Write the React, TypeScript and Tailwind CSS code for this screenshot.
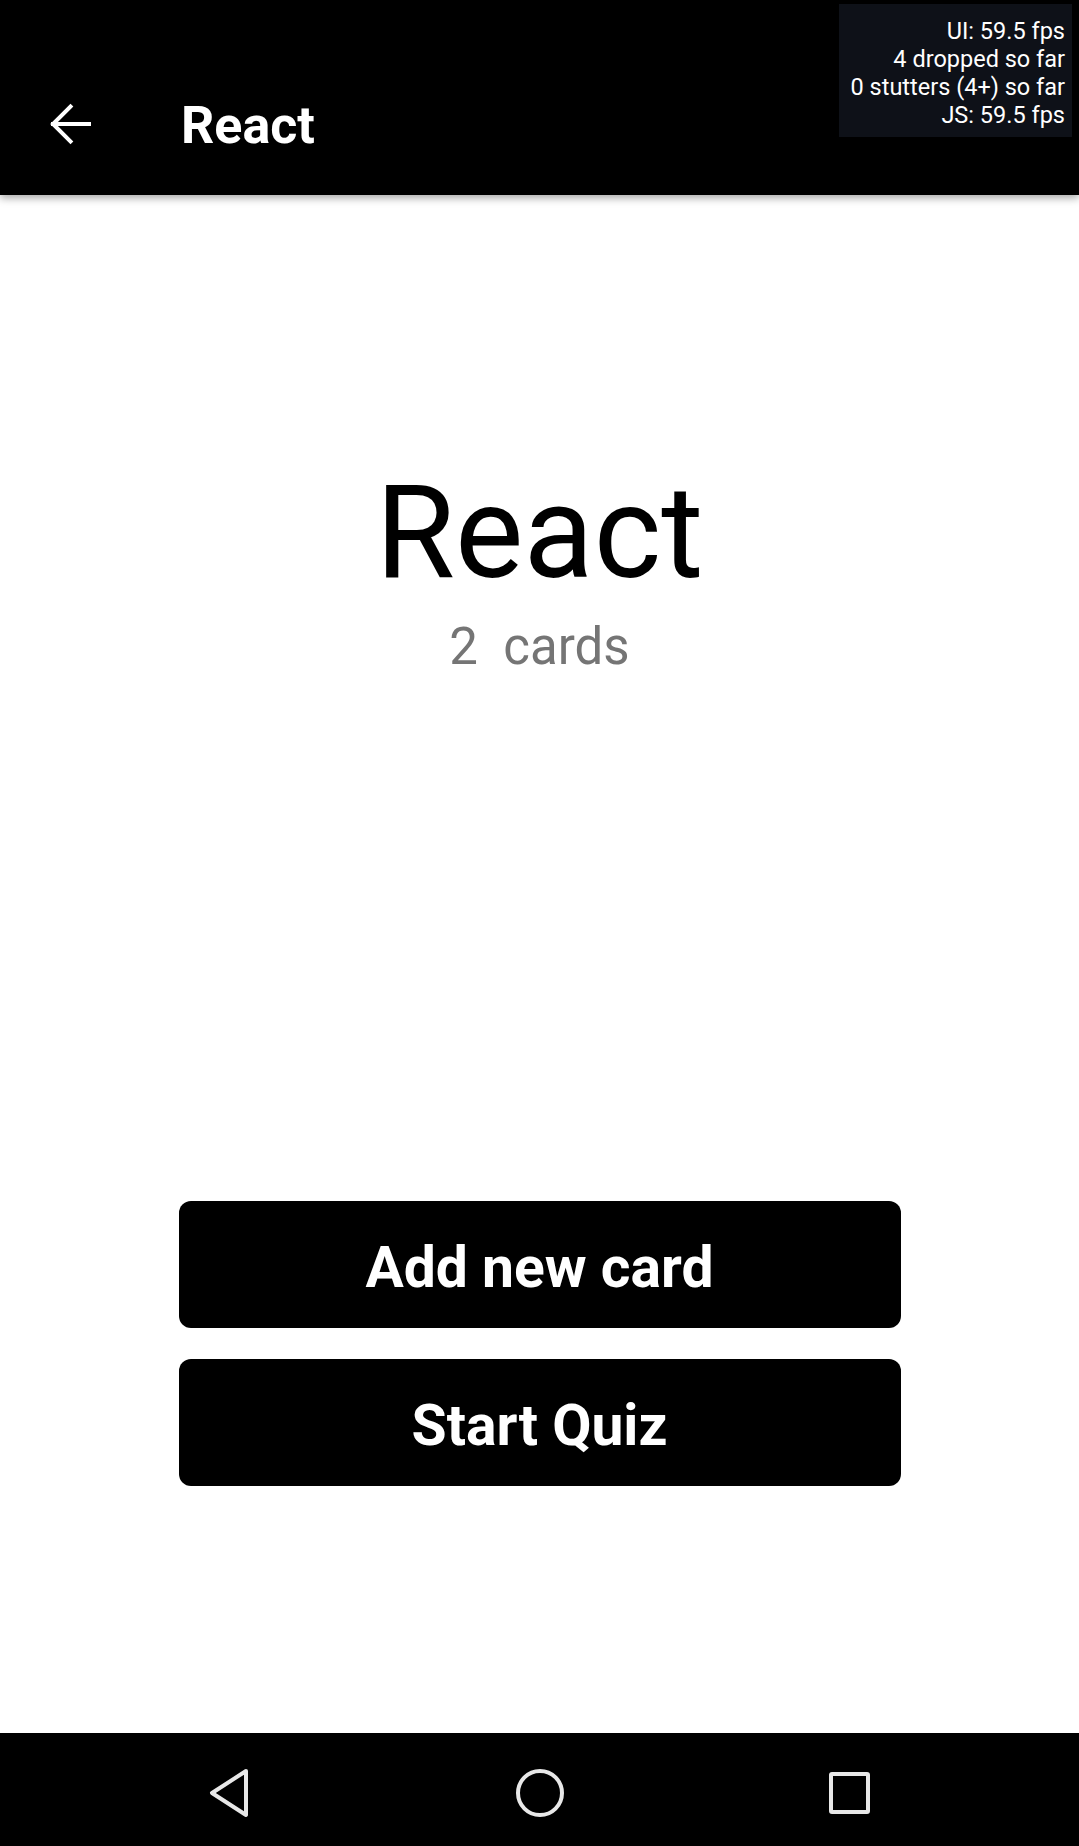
import React from "react";

const font = { fontFamily: "Roboto, 'Noto Sans', sans-serif" };

export default function App() {
  return (
    <div className="w-[1079px] h-[1846px] flex flex-col bg-white overflow-hidden relative" style={font}>
      <header className="relative z-10 h-[195px] shrink-0 bg-black shadow-[0_3px_8px_rgba(0,0,0,0.35)] flex items-center pt-[53px]">
        <div className="w-[181px] flex items-center pl-[49px]">
          <svg width="42" height="44" viewBox="0 0 42 44" fill="none" stroke="white" strokeWidth="4" strokeLinecap="square">
            <path d="M40 22H4" />
            <path d="M21.5 4.5L4 22l17.5 17.5" />
          </svg>
        </div>
        <div className="text-white font-bold text-[52px] leading-none mt-[4px]">React</div>
        <div className="absolute top-[4px] left-[839px] w-[233px] h-[133px] bg-[#0e1118] pt-[13px] pr-[7px] text-right text-white text-[23.5px] leading-[28px] whitespace-nowrap">
          <div>UI: 59.5 fps</div>
          <div>4 dropped so far</div>
          <div>0 stutters (4+) so far</div>
          <div>JS: 59.5 fps</div>
        </div>
      </header>

      <main className="flex-1 flex flex-col items-center pt-[273px]">
        <div className="text-[129px] leading-none text-black">React</div>
        <div className="mt-[24px] text-[51px] leading-none text-[#757575] whitespace-pre">2  cards</div>
        <div className="mt-[529px] flex flex-col gap-[31px] w-[722px]">
          <button className="h-[127px] rounded-[12px] bg-black text-white font-bold text-[57px] leading-none flex items-center justify-center pt-[5px]">
            Add new card
          </button>
          <button className="h-[127px] rounded-[12px] bg-black text-white font-bold text-[57px] leading-none flex items-center justify-center pt-[5px]">
            Start Quiz
          </button>
        </div>
      </main>

      <nav className="h-[113px] shrink-0 bg-black flex items-center justify-center pt-[7px]">
        <div className="w-[310px] flex items-center justify-center">
          <svg width="44" height="50" viewBox="0 0 44 50" fill="none" stroke="#e8e8e8" strokeWidth="4" strokeLinejoin="round">
            <path d="M38 3L4 25l34 22z" />
          </svg>
        </div>
        <div className="w-[310px] flex items-center justify-center">
          <div className="w-[48px] h-[48px] rounded-full border-[4px] border-[#e8e8e8]" />
        </div>
        <div className="w-[310px] flex items-center justify-center">
          <div className="w-[41px] h-[42px] rounded-[3px] border-[4px] border-[#e8e8e8]" />
        </div>
      </nav>
    </div>
  );
}
